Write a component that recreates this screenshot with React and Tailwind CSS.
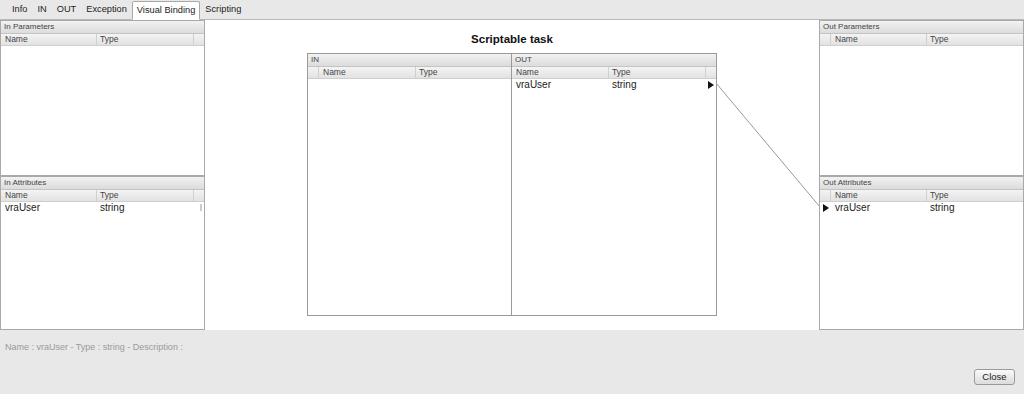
import React from 'react'

const TABS = ['Info', 'IN', 'OUT', 'Exception', 'Visual Binding', 'Scripting']

function Arrow() {
  return (
    <svg width="6" height="8" viewBox="0 0 6 8" className="shrink-0">
      <path d="M0 0 L6 4 L0 8 Z" fill="#111" />
    </svg>
  )
}

// header strip with title + column headers
function TableHead({ title, lead, nameW, tail }) {
  return (
    <>
      <div className="h-[13px] flex items-center px-[3px] text-[8px] text-[#444] bg-gradient-to-b from-[#f2f2f2] to-[#dcdcdc] border-b border-[#c4c4c4]">
        {title}
      </div>
      <div className="h-[12px] flex text-[8.5px] text-[#444] bg-gradient-to-b from-[#f4f4f4] to-[#e2e2e2] border-b border-[#cfcfcf]">
        {lead && <div className="w-[11px] border-r border-[#d0d0d0]" />}
        <div className="flex items-center px-[4px] border-r border-[#d0d0d0]" style={{ width: nameW }}>Name</div>
        <div className="flex-1 flex items-center px-[3px]">Type</div>
        {tail && <div className="w-[11px] border-l border-[#d0d0d0]" />}
      </div>
    </>
  )
}

function Row({ arrowLeft, arrowRight, nameW, lead, trailing }) {
  return (
    <div className="h-[11px] flex items-center text-[10px] leading-none text-[#222]">
      {lead && (
        <div className="w-[11px] flex items-center justify-center">{arrowLeft && <Arrow />}</div>
      )}
      <div className="px-[4px]" style={{ width: nameW }}>vraUser</div>
      <div className="flex-1 px-[3px]">string</div>
      {arrowRight && <div className="w-[11px] flex justify-center"><Arrow /></div>}
      {trailing && <div className="w-[11px] flex justify-end pr-[2px]"><div className="w-[2px] h-[7px] border border-[#ccc]" /></div>}
    </div>
  )
}

function SidePanel({ title, lead, rows, arrowLeft, trailing, h }) {
  return (
    <div className="border border-[#a9a9a9] bg-white flex flex-col" style={{ height: h }}>
      <TableHead title={title} lead={lead} nameW={96} tail={!lead} />
      {rows && <Row lead={lead} arrowLeft={arrowLeft} nameW={96} trailing={trailing} />}
    </div>
  )
}

export default function App() {
  return (
    <div className="w-[1024px] h-[394px] bg-[#e8e8e8] flex flex-col" style={{ fontFamily: '"Liberation Sans", Arial, sans-serif' }}>
      {/* tabs */}
      <div className="h-[20px] flex items-end pl-[7px] border-b border-[#b8b8b8] text-[9.25px] text-[#222]">
        {TABS.map(t => (
          t === 'Visual Binding' ? (
            <div key={t} className="h-[19px] px-[4px] flex items-center bg-white border border-[#a8a8a8] border-b-white -mb-px rounded-t-[2px]">{t}</div>
          ) : (
            <div key={t} className="h-[18px] px-[5px] flex items-center">{t}</div>
          )
        ))}
      </div>

      {/* main */}
      <div className="relative h-[310px] bg-white flex">
        <div className="w-[205px] flex flex-col">
          <SidePanel title="In Parameters" h={156} />
          <SidePanel title="In Attributes" rows trailing h={154} />
        </div>

        <div className="flex-1 flex flex-col items-center">
          <div className="mt-[11px] h-[16px] text-[11.5px] font-bold text-[#111]">Scriptable task</div>
          <div className="mt-[6px] w-[410px] h-[263px] border border-[#9a9a9a] flex">
            <div className="w-[204px] border-r border-[#9a9a9a] flex flex-col">
              <TableHead title="IN" lead nameW={97} />
            </div>
            <div className="flex-1 flex flex-col">
              <TableHead title="OUT" nameW={97} tail />
              <Row nameW={97} arrowRight />
            </div>
          </div>
        </div>

        <div className="w-[205px] flex flex-col">
          <SidePanel title="Out Parameters" lead h={156} />
          <SidePanel title="Out Attributes" lead rows arrowLeft h={154} />
        </div>

        <svg className="absolute left-0 top-0 pointer-events-none" width="1024" height="310">
          <line x1="716" y1="63" x2="820" y2="187" stroke="#9a9a9a" strokeWidth="1" />
        </svg>
      </div>

      {/* footer */}
      <div className="flex-1 flex flex-col px-[5px]">
        <div className="mt-[11px] text-[9px] text-[#9a9a9a]">Name : vraUser - Type : string - Description :</div>
        <div className="mt-auto mb-[9px] flex justify-end pr-[4px]">
          <button className="w-[41px] h-[16px] text-[9.5px] text-[#222] rounded-[3px] border border-[#9a9a9a] bg-gradient-to-b from-[#fafafa] to-[#dcdcdc]">Close</button>
        </div>
      </div>
    </div>
  )
}
